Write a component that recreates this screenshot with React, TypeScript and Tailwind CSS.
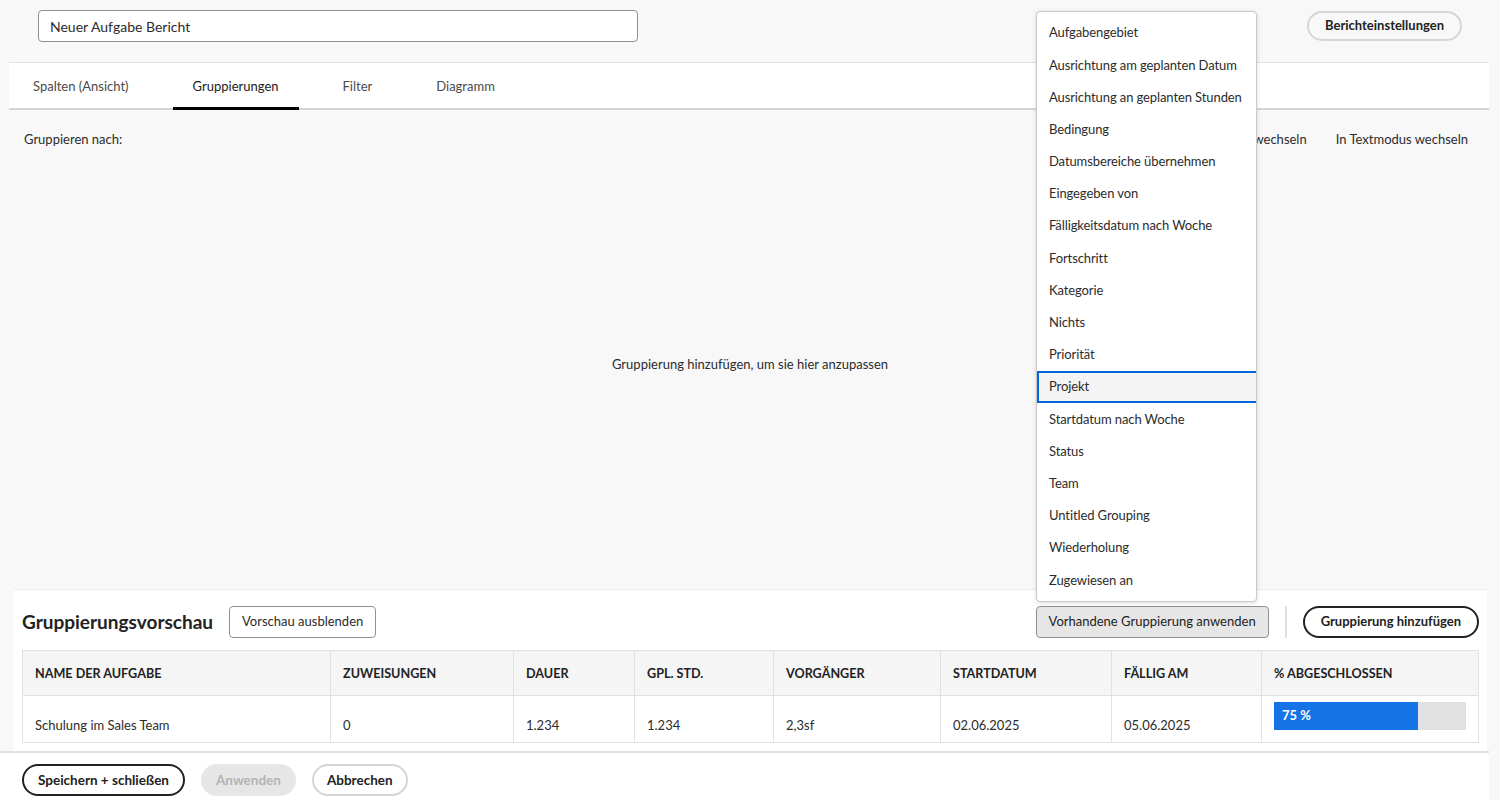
import React from "react";

const font = { fontFamily: "Lato, 'Open Sans', sans-serif" };

const groupings = [
  "Aufgabengebiet",
  "Ausrichtung am geplanten Datum",
  "Ausrichtung an geplanten Stunden",
  "Bedingung",
  "Datumsbereiche übernehmen",
  "Eingegeben von",
  "Fälligkeitsdatum nach Woche",
  "Fortschritt",
  "Kategorie",
  "Nichts",
  "Priorität",
  "Projekt",
  "Startdatum nach Woche",
  "Status",
  "Team",
  "Untitled Grouping",
  "Wiederholung",
  "Zugewiesen an",
];

const columns = [
  { title: "NAME DER AUFGABE", w: "w-[307px]", value: "Schulung im Sales Team" },
  { title: "ZUWEISUNGEN", w: "w-[183px]", value: "0" },
  { title: "DAUER", w: "w-[121px]", value: "1.234" },
  { title: "GPL. STD.", w: "w-[139px]", value: "1.234" },
  { title: "VORGÄNGER", w: "w-[167px]", value: "2,3sf" },
  { title: "STARTDATUM", w: "w-[171px]", value: "02.06.2025" },
  { title: "FÄLLIG AM", w: "w-[150px]", value: "05.06.2025" },
  { title: "% ABGESCHLOSSEN", w: "flex-1", value: null },
];

const tabs = ["Spalten (Ansicht)", "Gruppierungen", "Filter", "Diagramm"];

export default function App() {
  return (
    <div className="relative w-full h-[800px] bg-[#f8f8f8] text-[#2c2c2c] flex flex-col overflow-hidden" style={font}>
      {/* Header */}
      <div className="h-[62px] flex items-start justify-between pt-[10px] pl-[38px] pr-[38px] shrink-0">
        <div className="w-[600px] h-[32px] bg-white border border-[#8f8f8f] rounded-[4px] flex items-center px-[11px] text-[14px]">
          Neuer Aufgabe Bericht
        </div>
        <button className="mt-[1px] h-[30px] px-[16px] rounded-full border-2 border-[#d5d5d5] text-[13px] font-bold text-[#222]">
          Berichteinstellungen
        </button>
      </div>

      {/* Tabs */}
      <div className="ml-[9px] mr-[11px] h-[48px] bg-white border-t border-[#e1e1e1] border-b-2 border-b-[#d5d5d5] flex items-stretch pl-[4px] gap-6 shrink-0">
        {tabs.map((tab, i) => (
          <div
            key={tab}
            className={`px-5 pt-[4px] flex items-center text-[13px] -mb-[2px] border-b-[3px] ${
              i === 1 ? "border-black text-[#222]" : "border-transparent text-[#4b4b4b]"
            }`}
          >
            {tab}
          </div>
        ))}
      </div>

      {/* Grouping area */}
      <div className="flex-1 flex flex-col min-h-0">
        <div className="flex items-center justify-between pl-[24px] pr-[32px] pt-[20px] text-[13px]">
          <span>Gruppieren nach:</span>
          <div className="flex gap-[29px]">
            <span>In Diagrammmodus wechseln</span>
            <span>In Textmodus wechseln</span>
          </div>
        </div>
        <div className="flex-1 flex items-center justify-center text-[13px] pb-[10px]">
          Gruppierung hinzufügen, um sie hier anzupassen
        </div>
      </div>

      {/* Preview */}
      <div className="ml-[14px] mr-[13px] bg-white border-t border-[#ececec] px-[8px] pt-[16px] pb-[8px] shrink-0">
        <div className="flex items-center h-[32px]">
          <h2 className="text-[19px] font-bold text-[#222] mr-[16px]">Gruppierungsvorschau</h2>
          <button className="h-[32px] px-[12px] bg-white border border-[#8f8f8f] rounded-[4px] text-[13px]">
            Vorschau ausblenden
          </button>
          <div className="flex-1" />
          <button className="h-[32px] px-[12px] bg-[#e6e6e6] border border-[#8f8f8f] rounded-[4px] text-[13px] text-[#222]">
            Vorhandene Gruppierung anwenden
          </button>
          <div className="w-[2px] h-[32px] bg-[#e1e1e1] mx-[16px]" />
          <button className="h-[32px] px-[16px] rounded-full border-2 border-[#222] text-[13px] font-bold text-[#222]">
            Gruppierung hinzufügen
          </button>
        </div>

        <div className="mt-[12px] border border-[#e1e1e1] text-[13px]">
          <div className="flex h-[45px] bg-[#f5f5f5] border-b border-[#e1e1e1]">
            {columns.map((c, i) => (
              <div
                key={c.title}
                className={`${c.w} flex items-center pt-[2px] px-[12px] font-bold text-[12.6px] text-[#222] ${i > 0 ? "border-l border-[#e1e1e1]" : ""}`}
              >
                {c.title}
              </div>
            ))}
          </div>
          <div className="flex h-[46px]">
            {columns.map((c, i) => (
              <div
                key={c.title}
                className={`${c.w} px-[12px] ${i > 0 ? "border-l border-[#e1e1e1]" : ""} ${
                  c.value !== null ? "flex items-end pb-[7px]" : "pt-[6px]"
                }`}
              >
                {c.value !== null ? (
                  c.value
                ) : (
                  <div className="w-full h-[28px] bg-[#e1e1e1] flex">
                    <div className="h-full bg-[#1473e6] flex items-center pl-[8px] text-white font-bold" style={{ width: "75%" }}>
                      75 %
                    </div>
                  </div>
                )}
              </div>
            ))}
          </div>
        </div>
      </div>

      {/* Footer */}
      <div className="mr-[11px] h-[49px] bg-white border-t-2 border-[#e1e1e1] flex items-start pt-[11px] gap-4 px-[22px] shrink-0">
        <button className="h-[32px] px-[14px] rounded-full border-2 border-[#222] text-[13.5px] font-bold text-[#222]">
          Speichern + schließen
        </button>
        <button className="h-[32px] px-[15px] rounded-full bg-[#e6e6e6] text-[13.5px] font-bold text-[#b3b3b3]">
          Anwenden
        </button>
        <button className="h-[32px] px-[13px] rounded-full border-2 border-[#d5d5d5] text-[13.5px] font-bold text-[#222]">
          Abbrechen
        </button>
      </div>

      {/* Dropdown menu */}
      <div className="absolute left-[1036px] top-[11px] w-[221px] bg-white border border-[#cacaca] rounded-[4px] shadow-[0_1px_4px_rgba(0,0,0,0.15)] py-[5px] overflow-hidden">
        {groupings.map((g) => (
          <div
            key={g}
            className={`h-[32.2px] flex items-center text-[13px] whitespace-nowrap tracking-[-0.1px] ${
              g === "Projekt" ? "w-[223px] bg-[#f4f4f4] border-2 border-[#0265dc] px-[10px]" : "px-[12px] text-[#2c2c2c]"
            }`}
          >
            {g}
          </div>
        ))}
      </div>
    </div>
  );
}
